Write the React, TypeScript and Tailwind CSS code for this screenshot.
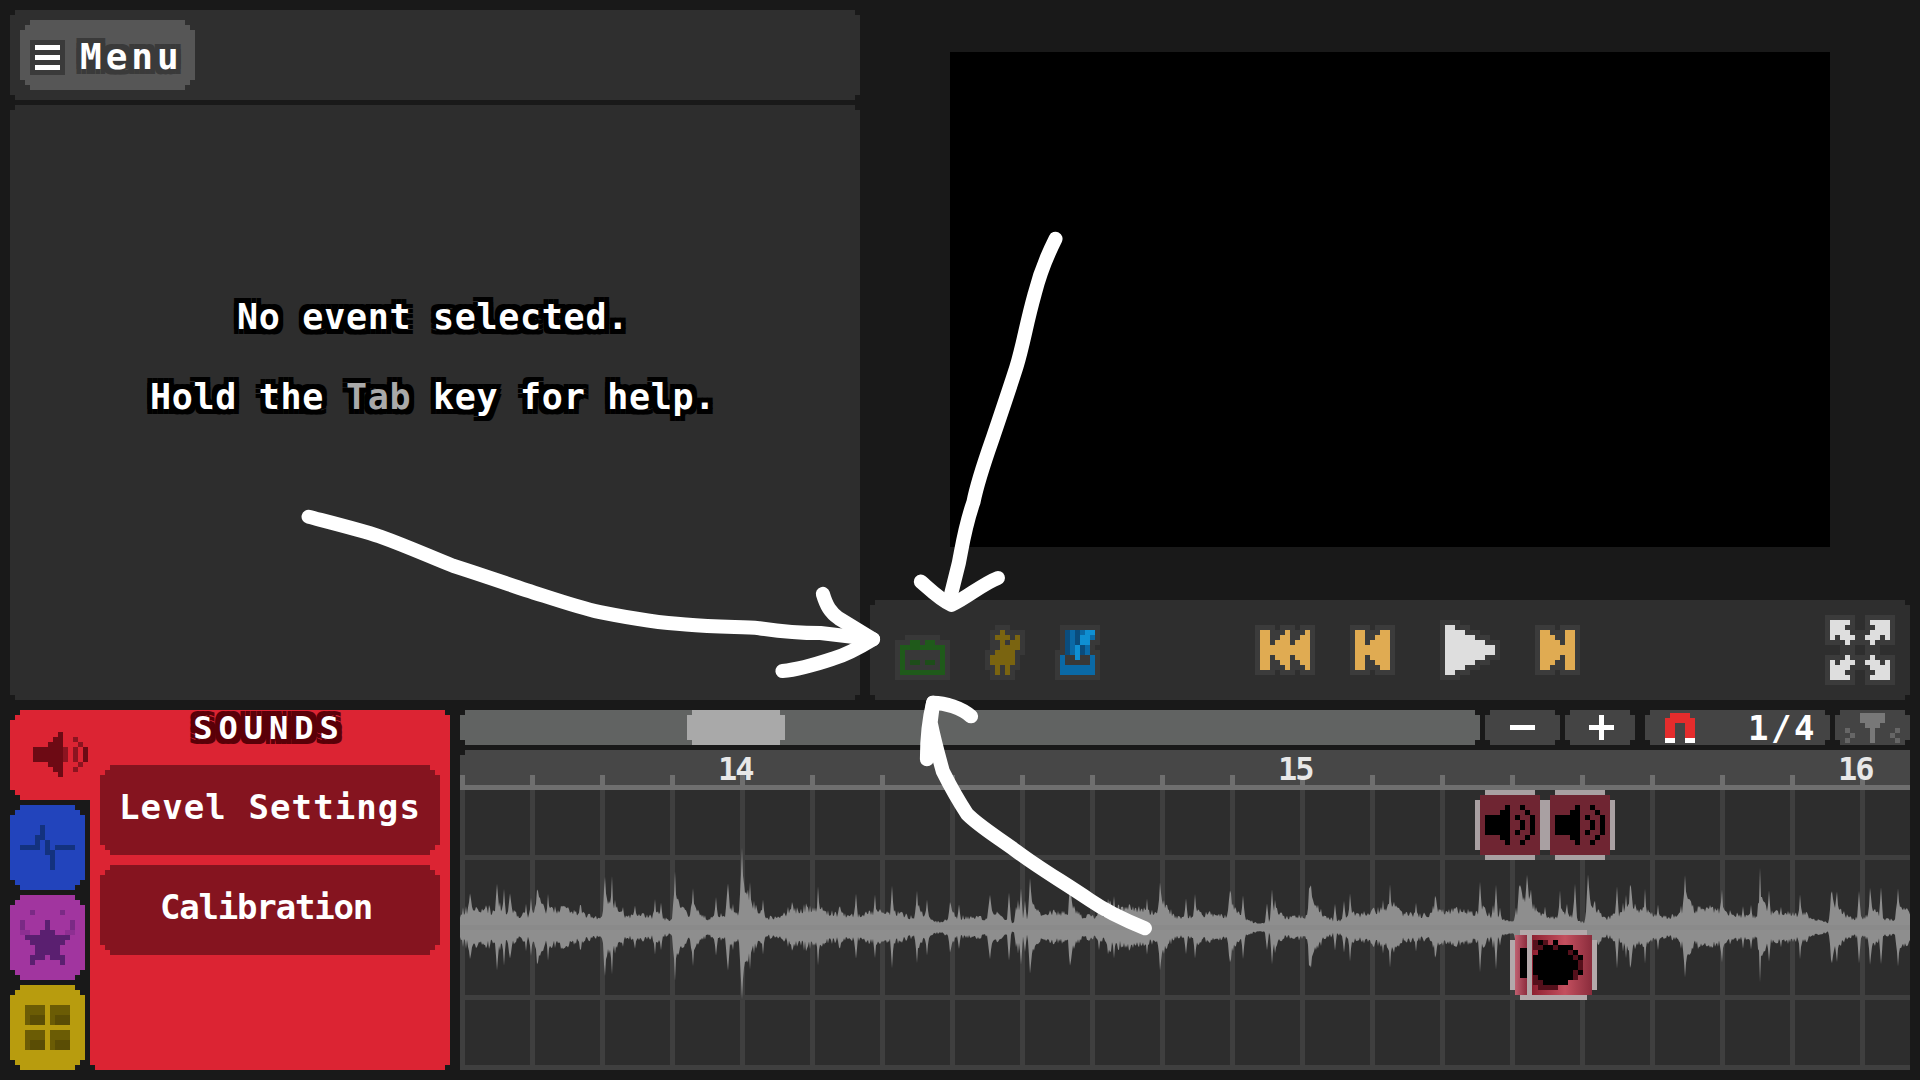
import React from 'react';

const FONT = "font-['DejaVu_Sans_Mono',monospace] font-bold";

// corner shapes shared by panels and buttons
const STAIR =
  '[clip-path:polygon(10px_0,calc(100%_-_10px)_0,calc(100%_-_10px)_5px,calc(100%_-_5px)_5px,calc(100%_-_5px)_10px,100%_10px,100%_calc(100%_-_10px),calc(100%_-_5px)_calc(100%_-_10px),calc(100%_-_5px)_calc(100%_-_5px),calc(100%_-_10px)_calc(100%_-_5px),calc(100%_-_10px)_100%,10px_100%,10px_calc(100%_-_5px),5px_calc(100%_-_5px),5px_calc(100%_-_10px),0_calc(100%_-_10px),0_10px,5px_10px,5px_5px,10px_5px)]';
const NOTCH =
  '[clip-path:polygon(5px_0,calc(100%_-_5px)_0,calc(100%_-_5px)_5px,100%_5px,100%_calc(100%_-_5px),calc(100%_-_5px)_calc(100%_-_5px),calc(100%_-_5px)_100%,5px_100%,5px_calc(100%_-_5px),0_calc(100%_-_5px),0_5px,5px_5px)]';

const BLACK_OUTLINE =
  '[text-shadow:5px_0_0_#000,-5px_0_0_#000,0_5px_0_#000,0_-5px_0_#000,5px_5px_0_#000,-5px_5px_0_#000,5px_-5px_0_#000,-5px_-5px_0_#000]';
const GREY_OUTLINE =
  '[text-shadow:5px_0_0_#3a3a3a,-5px_0_0_#3a3a3a,0_5px_0_#3a3a3a,0_-5px_0_#3a3a3a,5px_5px_0_#3a3a3a,-5px_5px_0_#3a3a3a,5px_-5px_0_#3a3a3a,-5px_-5px_0_#3a3a3a]';
const RED_OUTLINE =
  '[text-shadow:5px_0_0_#5a0008,-5px_0_0_#5a0008,0_5px_0_#5a0008,0_-5px_0_#5a0008,5px_5px_0_#5a0008,-5px_5px_0_#5a0008,5px_-5px_0_#5a0008,-5px_-5px_0_#5a0008]';

// draws a sprite from rows of characters, one cell = 5px
function Pix({
  rows,
  colors,
  halo,
  className,
}: {
  rows: string[];
  colors: Record<string, string>;
  halo?: string;
  className?: string;
}) {
  const cell = 5;
  const pad = halo ? 1 : 0;
  const w = Math.max(...rows.map((r) => r.length));
  const h = rows.length;
  const filled = (x: number, y: number) => {
    const c = rows[y]?.[x];
    return c !== undefined && c !== '.';
  };
  const rects: React.ReactNode[] = [];
  if (halo) {
    for (let y = -1; y <= h; y++) {
      for (let x = -1; x <= w; x++) {
        let near = false;
        for (let dy = -1; dy <= 1; dy++) for (let dx = -1; dx <= 1; dx++) if (filled(x + dx, y + dy)) near = true;
        if (near) rects.push(<rect key={`h${x}_${y}`} x={(x + 1) * cell} y={(y + 1) * cell} width={cell} height={cell} fill={halo} />);
      }
    }
  }
  rows.forEach((row, y) =>
    row.split('').forEach((c, x) => {
      if (c !== '.') rects.push(<rect key={`${x}_${y}`} x={(x + pad) * cell} y={(y + pad) * cell} width={cell} height={cell} fill={colors[c]} />);
    })
  );
  return (
    <svg width={(w + pad * 2) * cell} height={(h + pad * 2) * cell} shapeRendering="crispEdges" className={`block shrink-0 ${className ?? ''}`}>
      {rects}
    </svg>
  );
}

const HALO = '#3b3b3b';
const GOLD = { '#': '#e0ab52' };
const SILVER = { '#': '#dedede' };

const first = ['##...#...#', '##..##..##', '##.###.###', '##########', '##########', '##.###.###', '##..##..##', '##...#...#'];
const prev = ['##...##', '##..###', '##.####', '#######', '#######', '##.####', '##..###', '##...##'];
const next = ['##...##', '###..##', '####.##', '#######', '#######', '####.##', '###..##', '##...##'];
const play = ['##', '####', '######', '########', '##########', '##########', '########', '######', '####', '##'];
const fullscreen = [
  '####....####',
  '###......###',
  '####....####',
  '#.###..###.#',
  '...#....#...',
  '............',
  '............',
  '...#....#...',
  '#.###..###.#',
  '####....####',
  '###......###',
  '####....####',
];
const battery = ['..##.##..', '#########', '#.......#', '#.......#', '#.aa.aa.#', '#.......#', '#########'];
const cowboy = ['..#...', '.###.#', '..#.##', '..####', '.####.', '#####.', '#####.', '.#.#..', '.#.#..'];
const metronome = ['.DdDdll', '.DdDlld', '.DdDll.', '.DdlDd.', '.DdlDd.', 'd..l..d', 'd.....d', 'ddddddd', 'ddddddd'];
const magnet = ['.rrrr.', 'rrrrrr', 'rr..rr', 'rr..rr', 'rr..rr', 'ww..ww'];
const funnel = ['...#####...', '...#####...', '....###....', 'c....#....c', '.c...#...c.', 'c....#....c'];
const speakerTab = ['.....d.....', '....dd..m..', '...ddd...m.', 'ddddddm.m.d', 'ddddddm.m.d', 'ddddddm.m.d', '...ddd...m.', '....dd..m..', '.....d.....'];
const pulse = ['....#......', '....#......', '...##......', '...#.#.....', '####.#.####', '.....##....', '......#....', '......#....', '......#....'];
const star = [
  '..d.....d..',
  '...........',
  'd....s....d',
  'd....s....d',
  'mm..sss..mm',
  '.sssssssss.',
  '..sssssss..',
  '...sssss...',
  '...sssss...',
  '..sss.sss..',
  '..s.....s..',
];
const blocks = ['aaaa.aaaa', 'aaaa.aaaa', 'abbb.abbb', 'abbb.abbb', '.........', 'aaaa.aaaa', 'aaaa.aaaa', 'abbb.abbb', 'abbb.abbb'];
const speakerEvent = ['....#..#..', '...##...#.', '#####.#..#', '#####..#.#', '#####..#.#', '#####.#..#', '...##...#.', '....#..#..'];
const ball = ['rbr.b.....', 'rrbbrbbb..', '.bbbbbbrb.', 'bbbbbbbbrb', 'bbbbbbbbbr', 'bbbbbbbbbr', 'bbbbbbbbrb', 'rbbbbbbbr.', 'rrbbbbb...', '.rrrr.....'];

// audio track: thin spikes with a tail, over a noisy floor
const PEAKS: [number, number][] = [
  [10, 50], [37, 50], [50, 40], [77, 58], [88, 34], [105, 30], [120, 34], [145, 60], [152, 55], [175, 32], [195, 34], [215, 58], [233, 42], [268, 45], [282, 92], [290, 55],
  [332, 38], [358, 45], [380, 32], [415, 34], [457, 38], [490, 34], [530, 40], [570, 55], [610, 48], [650, 38], [700, 60], [735, 38], [770, 48], [815, 38], [850, 62], [890, 36],
  [930, 56], [975, 42], [1020, 46], [1060, 66], [1067, 62], [1100, 42], [1128, 58], [1170, 60], [1185, 42], [1225, 62], [1262, 44], [1300, 60], [1340, 38], [1372, 58], [1410, 46], [1438, 56],
];

function buildWave() {
  let seed = 23;
  const rand = () => {
    seed = (seed * 16807) % 2147483647;
    return seed / 2147483647;
  };
  const needles = new Array(1460).fill(0);
  for (let x = 3; x < 1450; x += 1) {
    if (rand() < 0.06) {
      const h = 20 + 30 * rand() * rand();
      for (let d = -2; d <= 2; d++) needles[x + d] = Math.max(needles[x + d], h * (1 - Math.abs(d) / 2.6));
    }
  }
  const top: string[] = [];
  const bottom: string[] = [];
  for (let x = 0; x <= 1450; x += 1) {
    const floor = 14 + 5 * Math.sin(x / 47) + 4 * Math.sin(x / 13);
    let env = floor;
    for (const [px, amp] of PEAKS) {
      const d = x - px;
      if (d >= 0) env = Math.max(env, amp * Math.exp(-d / 3), amp * 0.62 * Math.exp(-d / 16));
      else if (d > -4) env = Math.max(env, amp * (1 + d / 4) * 0.85);
    }
    const a = Math.max(4, env * (0.62 + 0.38 * rand()), needles[x]);
    const b = a * (0.9 + 0.1 * rand());
    top.push(`${x},${137.5 - a}`);
    bottom.unshift(`${x},${137.5 + b}`);
  }
  return `M${top.join('L')}L${bottom.join('L')}Z`;
}
const WAVE = buildWave();

const SoundEvent = ({ left }: { left: string }) => (
  <div className={`absolute top-0 w-[70px] h-[70px] ${left} ${STAIR} bg-[#a9a0a2] p-[5px]`}>
    <div className="h-full flex items-center justify-center bg-[#6f2532]">
      <Pix rows={speakerEvent} colors={{ '#': '#000' }} />
    </div>
  </div>
);

export default function App() {
  return (
    <div className="relative w-[1920px] h-[1080px] overflow-hidden bg-[#191919] p-[10px] flex flex-col gap-[10px] text-white">
      {/* top half */}
      <div className="flex gap-[10px] h-[690px]">
        <div className="w-[850px] flex flex-col gap-[5px]">
          <div className={`h-[90px] bg-[#2f2f2f] p-[10px] ${NOTCH}`}>
            <button className={`h-[70px] w-[175px] bg-[#565656] pl-[10px] pt-[4px] flex items-center gap-[15px] ${STAIR}`}>
              <Pix rows={['#####', '.....', '#####', '.....', '#####']} colors={{ '#': '#fff' }} halo="#3a3a3a" />
              <span className={`${FONT} ${GREY_OUTLINE} text-[36px] tracking-[4px] leading-none`}>Menu</span>
            </button>
          </div>
          <div className={`flex-1 bg-[#2d2d2d] pt-[172px] pr-[4px] text-center ${NOTCH} ${FONT} text-[35px] tracking-[0.7px] leading-[80px] ${BLACK_OUTLINE}`}>
            <p>No event selected.</p>
            <p>
              Hold the <span className="text-[#a9a9a9]">Tab</span> key for help.
            </p>
          </div>
        </div>

        <div className="flex-1 flex flex-col">
          <div className="h-[590px] pb-[12px] flex items-center justify-center">
            <div className="w-[880px] h-[495px] bg-black" />
          </div>
          <div className={`h-[100px] bg-[#2e2e2e] pl-[25px] pr-[15px] flex items-center ${NOTCH}`}>
            <Pix rows={battery} colors={{ '#': '#1f5a1a', a: '#1d4d19' }} halo="#383838" className="mt-[14px]" />
            <Pix rows={cowboy} colors={{ '#': '#7a6410' }} halo="#383838" className="ml-[35px] mt-[5px]" />
            <Pix rows={metronome} colors={{ d: '#0a69a6', D: '#0a4c7c', l: '#0f8fd2' }} halo="#383838" className="ml-[30px] mt-[5px]" />
            <Pix rows={first} colors={GOLD} halo={HALO} className="ml-[155px]" />
            <Pix rows={prev} colors={GOLD} halo={HALO} className="ml-[35px]" />
            <Pix rows={play} colors={SILVER} halo={HALO} className="ml-[45px]" />
            <Pix rows={next} colors={GOLD} halo={HALO} className="ml-[35px]" />
            <Pix rows={fullscreen} colors={SILVER} halo={HALO} className="ml-auto" />
          </div>
        </div>
      </div>

      {/* bottom half */}
      <div className="flex gap-[10px] h-[360px]">
        <div className="w-[440px] flex">
          <div className="w-[80px] flex flex-col gap-[5px]">
            <div className="h-[90px] bg-[#dc2433] pl-[23px] pt-[22px] [clip-path:polygon(10px_0,100%_0,100%_100%,10px_100%,10px_calc(100%_-_5px),5px_calc(100%_-_5px),5px_calc(100%_-_10px),0_calc(100%_-_10px),0_10px,5px_10px,5px_5px,10px_5px)]">
              <Pix rows={speakerTab} colors={{ d: '#6d0a14', m: '#8c1420' }} />
            </div>
            <div className={`h-[85px] w-[75px] bg-[#2244bc] flex items-center justify-center ${STAIR}`}>
              <Pix rows={pulse} colors={{ '#': '#13327f' }} />
            </div>
            <div className={`h-[85px] w-[75px] bg-[#a1359f] flex items-center justify-center ${STAIR}`}>
              <Pix rows={star} colors={{ s: '#5a1f70', d: '#7a2a85', m: '#8d2f92' }} />
            </div>
            <div className={`h-[85px] w-[75px] bg-[#b89c0e] flex items-center justify-center ${STAIR}`}>
              <Pix rows={blocks} colors={{ a: '#6b5c05', b: '#5a4d05' }} />
            </div>
          </div>
          <div className="flex-1 bg-[#dc2433] px-[10px] flex flex-col gap-[10px] [clip-path:polygon(0_0,calc(100%_-_5px)_0,calc(100%_-_5px)_5px,100%_5px,100%_calc(100%_-_5px),calc(100%_-_5px)_calc(100%_-_5px),calc(100%_-_5px)_100%,5px_100%,5px_calc(100%_-_5px),0_calc(100%_-_5px))]">
            <div className={`h-[45px] text-center pr-[2px] ${FONT} ${RED_OUTLINE} text-[32px] tracking-[6px] leading-[36px]`}>SOUNDS</div>
            <button className={`h-[90px] pb-[5px] bg-[#85141f] ${STAIR} ${FONT} text-[34px] tracking-[1.1px]`}>Level Settings</button>
            <button className={`h-[90px] pb-[5px] pr-[8px] bg-[#85141f] ${STAIR} ${FONT} text-[34px] tracking-[-1.2px]`}>Calibration</button>
          </div>
        </div>

        <div className="flex-1 flex flex-col">
          {/* scroll, zoom and snap controls */}
          <div className="h-[35px] flex gap-[5px]">
            <div className={`w-[1020px] bg-[#616362] pl-[227px] ${NOTCH}`}>
              <div className={`w-[98px] h-full bg-[#a9a9a9] ${NOTCH}`} />
            </div>
            <div className={`w-[75px] bg-[#444] flex items-center justify-center ${NOTCH}`}>
              <Pix rows={['#####']} colors={{ '#': '#fff' }} />
            </div>
            <div className={`w-[70px] bg-[#444] pl-[2px] flex items-center justify-center ${NOTCH}`}>
              <Pix rows={['..#..', '..#..', '#####', '..#..', '..#..']} colors={{ '#': '#fff' }} />
            </div>
            <div className={`w-[185px] ml-[5px] bg-[#444] pl-[20px] pr-[13px] flex items-center justify-between ${NOTCH}`}>
              <Pix rows={magnet} colors={{ r: '#e42c2c', w: '#fff' }} />
              <span className={`${FONT} text-[34px] tracking-[2.5px] leading-none`}>1/4</span>
            </div>
            <div className={`flex-1 bg-[#444] flex items-center justify-center ${NOTCH}`}>
              <Pix rows={funnel} colors={{ '#': '#787878', c: '#666' }} />
            </div>
          </div>

          {/* ruler */}
          <div className={`relative h-[40px] mt-[5px] bg-[#474747] flex flex-col justify-end [clip-path:polygon(5px_0,100%_0,100%_100%,0_100%,0_5px,5px_5px)]`}>
            <span className={`absolute top-0 left-[258px] ${FONT} text-[32px] tracking-[-2px] leading-[38px] text-[#e8e8e8]`}>14</span>
            <span className={`absolute top-0 left-[818px] ${FONT} text-[32px] tracking-[-2px] leading-[38px] text-[#e8e8e8]`}>15</span>
            <span className={`absolute top-0 left-[1378px] ${FONT} text-[32px] tracking-[-2px] leading-[38px] text-[#e8e8e8]`}>16</span>
            <div className="h-[10px] bg-[linear-gradient(to_right,#6f6f6f_5px,transparent_5px)] bg-[size:70px_10px]" />
            <div className="h-[5px] bg-[#6f6f6f]" />
          </div>

          {/* track area */}
          <div className="relative flex-1 bg-[#2d2d2d] bg-[linear-gradient(to_right,#3f3f3f_5px,transparent_5px),linear-gradient(to_bottom,transparent_65px,#3f3f3f_65px)] bg-[size:70px_70px]">
            <svg width="1450" height="280" className="absolute inset-0">
              <path d={WAVE} fill="#8e8e8e" />
              <rect x="0" y="135" width="1450" height="5" fill="#8a8a8a" />
            </svg>
            <SoundEvent left="left-[1015px]" />
            <SoundEvent left="left-[1085px]" />
            <div className={`absolute top-[140px] left-[1050px] w-[87px] h-[70px] ${STAIR} bg-[#b3a8aa] p-[5px] flex`}>
              <div className="w-[12px] h-full bg-[linear-gradient(to_right,#c06070,#8e2c3e)] flex items-center justify-end">
                <div className="w-[7px] h-[30px] bg-black mt-[-5px]" />
              </div>
              <div className="w-[5px] h-full bg-[#b3a8aa]" />
              <div className="flex-1 bg-[linear-gradient(to_right,#8e1f30,#c4505f_55%,#8a2c3c)] flex items-center pl-[1px]">
                <Pix rows={ball} colors={{ b: '#000', r: '#54101b' }} />
              </div>
            </div>
          </div>
        </div>
      </div>

      {/* freehand arrows drawn on top of the screenshot */}
      <svg viewBox="0 0 1568 882" width="1920" height="1080" className="absolute inset-0 pointer-events-none" fill="none" stroke="#fff" strokeWidth="11.5" strokeLinecap="round" strokeLinejoin="round">
        <path d="M252 422 C275 428 295 433 310 438 C335 447 352 455 370 462 C395 470 412 476 430 482 C455 490 472 496 490 500 C515 505 540 509 560 510 C585 512 605 512 620 513 C640 516 655 517 670 517 L713 522" />
        <path d="M672 485 C675 495 678 500 685 505 L713 522 C700 530 690 535 680 538 C665 543 650 547 639 548" />
        <path d="M862 195 C852 215 848 228 845 240 C838 265 836 280 830 300 C822 325 815 345 810 360 C803 380 798 395 795 410 C788 430 786 445 783 460 L775 492" />
        <path d="M752 475 C760 482 768 490 777 494 C790 488 802 477 815 472" />
        <path d="M935 758 C915 750 903 744 890 735 C868 720 850 710 830 695 C812 682 800 675 790 665 C780 650 775 640 770 630 C765 612 762 600 760 590 L762 574" />
        <path d="M793 585 C785 578 772 574 762 574 C758 590 757 605 757 620" />
      </svg>
    </div>
  );
}
